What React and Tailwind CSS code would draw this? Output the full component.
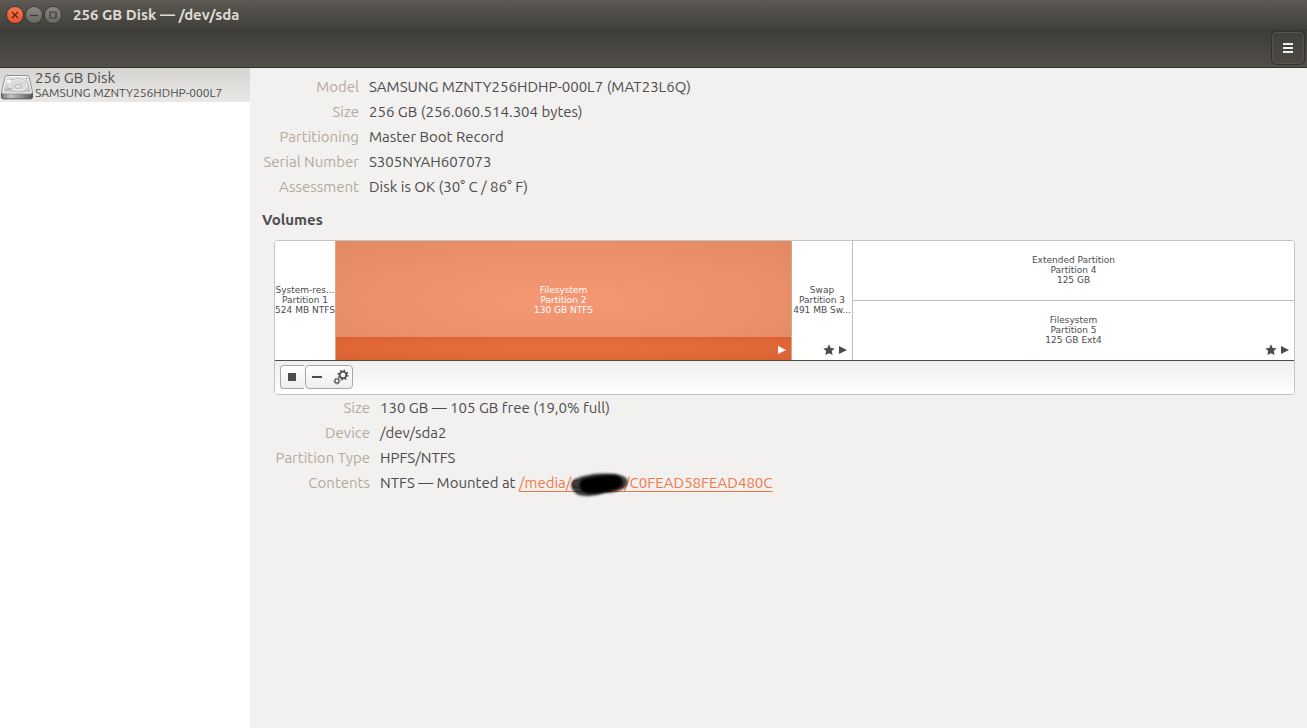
import { useState } from 'react';

const diskInfo = [
    { label: 'Model', value: 'SAMSUNG MZNTY256HDHP-000L7 (MAT23L6Q)' },
    { label: 'Size', value: '256 GB (256.060.514.304 bytes)' },
    { label: 'Partitioning', value: 'Master Boot Record' },
    { label: 'Serial Number', value: 'S305NYAH607073' },
    { label: 'Assessment', value: 'Disk is OK (30° C / 86° F)' },
];

export default function App(){

    const [selected, setSelected] = useState(2);

    return(
        <div className="flex min-h-screen flex-col bg-[#f2f1f0] font-['Ubuntu','Noto_Sans',sans-serif] text-[15px] text-[#4c4c4c]">
            <TitleBar/>
            <div className="flex grow">
                <Sidebar/>
                <main className="min-w-0 grow px-3 pt-[6px]">
                    <InfoList rows={diskInfo} columns="grid-cols-[97px_1fr] gap-x-[10px]"/>
                    <h2 className="my-2 leading-[25px] font-bold">Volumes</h2>
                    <div className="pl-3">
                        <Volumes selected={selected} setSelected={setSelected}/>
                        <InfoList columns="grid-cols-[96px_1fr] gap-x-[10px]" rows={[
                            { label: 'Size', value: '130 GB — 105 GB free (19,0% full)' },
                            { label: 'Device', value: '/dev/sda2' },
                            { label: 'Partition Type', value: 'HPFS/NTFS' },
                            { label: 'Contents', value: <MountPoint/> },
                        ]}/>
                    </div>
                </main>
            </div>
        </div>
    )
}

const TitleBar = () => {
    return(
        <header>
            <div className="flex h-[29px] items-center bg-linear-to-b from-[#5c5a52] to-[#403f3a] pl-[7px]">
                <div className="flex gap-[3px]">
                    <WindowButton label="Close" color="bg-linear-to-b from-[#f5764b] to-[#e9532a] text-[#5a2413]">
                        <path d="M5 5l6 6M11 5l-6 6"/>
                    </WindowButton>
                    <WindowButton label="Minimize" color="bg-linear-to-b from-[#8b8981] to-[#686760] text-[#3c3b37]">
                        <path d="M4 8.500h8"/>
                    </WindowButton>
                    <WindowButton label="Maximize" color="bg-linear-to-b from-[#8b8981] to-[#686760] text-[#3c3b37]">
                        <path d="M5 5h6v6H5z"/>
                    </WindowButton>
                </div>
                <h1 className="ml-3 pt-px font-bold text-[#dfdbd2]">256 GB Disk — /dev/sda</h1>
            </div>
            <div className="flex h-[39px] items-center justify-end border-b border-[#33322e] bg-linear-to-b from-[#3d3c38] to-[#524f47] pr-[2px]">
                <button aria-label="Menu" className="flex h-[34px] w-[34px] items-center justify-center rounded-[5px] border border-[#33322e] bg-linear-to-b from-[#42413c] to-[#4b4942] text-[#eeeeec] shadow-[inset_0_0_0_1px_#56544d]">
                    <svg width="10" height="10" viewBox="0 0 10 10" fill="currentColor"><path d="M0 0h10v2H0zM0 4h10v2H0zM0 8h10v2H0z"/></svg>
                </button>
            </div>
        </header>
    )
}

const WindowButton = ({label, color, children}) => {
    return(
        <button aria-label={label} className={`h-4 w-4 rounded-full shadow-[0_0_0_1px_#3a3934] ${color}`}>
            <svg width="16" height="16" viewBox="0 0 16 16" fill="none" stroke="currentColor" strokeWidth="1.2">{children}</svg>
        </button>
    )
}

const Sidebar = () => {
    return(
        <nav className="w-[250px] shrink-0 bg-white">
            <a href="#sda" className="flex h-[34px] items-center gap-px bg-linear-to-b from-[#d6d4d1] to-[#eae8e6] pl-px">
                <DriveIcon/>
                <span className="flex flex-col whitespace-nowrap">
                    <span className="leading-4">256 GB Disk</span>
                    <span className="text-xs leading-[14px]">SAMSUNG MZNTY256HDHP-000L7</span>
                </span>
            </a>
        </nav>
    )
}

const DriveIcon = () => {
    return(
        <svg className="shrink-0" width="33" height="32" viewBox="0 0 33 32">
            <defs>
                <linearGradient id="plate" x1="0" y1="0" x2="0" y2="1">
                    <stop offset="0" stopColor="#e4e4e4"/>
                    <stop offset="1" stopColor="#c9c9c9"/>
                </linearGradient>
                <linearGradient id="front" x1="0" y1="0" x2="1" y2="0">
                    <stop offset="0" stopColor="#777"/>
                    <stop offset="0.3" stopColor="#c5c5c5"/>
                    <stop offset="1" stopColor="#555"/>
                </linearGradient>
            </defs>
            <path d="M.5 23.500h31v4.500q0 1.800-1.800 1.800H2.300Q.5 29.800.5 28z" fill="url(#front)" stroke="#555"/>
            <path d="M6 6.500h20q1.600 0 2.100 1.600l3.300 14.400q.5 2.500-1.700 2.500H2.300Q.2 25 .6 22.500L4 8.100q.4-1.600 2-1.600z" fill="url(#plate)" stroke="#909090"/>
            <path d="M6.300 7.700h19.400q1 0 1.300 1l3.200 13.600q.3 1.500-.9 1.500H2.700q-1.200 0-.9-1.500L5 8.700q.3-1 1.300-1z" fill="none" stroke="#fff" strokeOpacity=".75"/>
            <path d="M6 10.500h6.500q5-2 10 .3 6 3 5 8-1.500 3.700-9 4.200-6 .2-9-2.500H4" fill="#d2d2d2" stroke="#adadad" strokeWidth=".8"/>
            <ellipse cx="17" cy="16" rx="9" ry="5.500" fill="#dadada" stroke="#f4f4f4" strokeWidth=".8"/>
            <ellipse cx="17" cy="17.500" rx="3.300" ry="1.900" fill="#e8e8e8" stroke="#a8a8a8" strokeWidth=".8"/>
            <path d="M6.500 10.500h3.500l-1 3.500H5.500z" fill="#fafafa"/>
            <path d="M4 20.500l7-1" stroke="#aaa"/>
            <path d="M25 9.500h1.500M27.500 22h1.500" stroke="#999"/>
        </svg>
    )
}

const InfoList = ({rows, columns}) => {
    return(
        <dl className={`grid leading-[25px] ${columns}`}>
            {rows.map(row => (
                <div className="contents" key={row.label}>
                    <dt className="text-right whitespace-nowrap text-[#b5aa9b]">{row.label}</dt>
                    <dd>{row.value}</dd>
                </div>
            ))}
        </dl>
    )
}

const Volumes = ({selected, setSelected}) => {
    return(
        <section className="overflow-hidden rounded-[4px] border border-[#c5c3c0] bg-white">
            <div className="grid h-[119px] grid-cols-[60fr_457fr_60fr_442fr]">
                <Partition id={1} lines={['System-res...', 'Partition 1', '524 MB NTFS']} selected={selected} onSelect={setSelected}/>
                <Partition id={2} lines={['Filesystem', 'Partition 2', '130 GB NTFS']} mounted selected={selected} onSelect={setSelected}/>
                <Partition id={3} lines={['Swap', 'Partition 3', '491 MB Sw...']} star mounted selected={selected} onSelect={setSelected}/>
                <div className="grid grid-rows-2 border-l border-[#c0c0c0]">
                    <div className="grid border-b border-[#c0c0c0]">
                        <Partition id={4} lines={['Extended Partition', 'Partition 4', '125 GB']} selected={selected} onSelect={setSelected}/>
                    </div>
                    <Partition id={5} lines={['Filesystem', 'Partition 5', '125 GB Ext4']} star mounted selected={selected} onSelect={setSelected}/>
                </div>
            </div>
            <div className="flex h-[34px] gap-px border-t border-[#4c4c4c] bg-linear-to-b from-[#f0efee] to-white px-[5px] pt-1">
                <button aria-label="Unmount" className="flex h-6 w-6 items-center justify-center rounded-l-[4px] border border-r-0 border-[#a9a7a4] bg-linear-to-b from-white to-[#efeeed] pr-px">
                    <span className="h-2 w-2 bg-[#4c4c4c]"></span>
                </button>
                <div className="flex h-6 w-12 rounded-[4px] border border-[#a9a7a4] bg-linear-to-b from-white to-[#efeeed]">
                    <button aria-label="Delete partition" className="flex w-[22px] items-center justify-center">
                        <span className="h-[2px] w-[10px] bg-[#4c4c4c]"></span>
                    </button>
                    <button aria-label="More actions" className="flex w-6 items-center justify-end pr-[3px]">
                        <GearsIcon/>
                    </button>
                </div>
            </div>
        </section>
    )
}

const Partition = ({id, lines, star, mounted, selected, onSelect}) => {

    const isSelected = id === selected;

    return(
        <button onClick={() => onSelect(id)} className={`relative flex min-w-0 items-center justify-center pb-px font-['DejaVu_Sans',sans-serif] text-[9px] leading-[10px] ${isSelected ? 'border-x border-[#d9a48c] bg-radial from-[#f59873] to-[#e28a64] text-white':'bg-white text-[#4c4c4c]'}`}>
            {isSelected && <span className="absolute inset-x-0 bottom-0 h-[23px] bg-radial from-[#e8703f] to-[#db6230]"></span>}
            <span className="relative whitespace-nowrap">
                {lines.map(line => <span className="block" key={line}>{line}</span>)}
            </span>
            {mounted && (
                <span className="absolute right-[5px] bottom-[4px] flex h-3 items-center gap-1">
                    {star && <svg width="12" height="12" viewBox="0 0 12 12" fill="currentColor"><path d="M6 .3l1.700 3.600 4 .5-2.900 2.700.8 4L6 9.200 2.400 11.100l.8-4L.3 4.400l4-.5z"/></svg>}
                    <svg width="8" height="8" viewBox="0 0 8 8" fill="currentColor"><path d="M0 0l8 4-8 4z"/></svg>
                </span>
            )}
        </button>
    )
}

const GearsIcon = () => {
    return(
        <svg width="16" height="16" viewBox="0 0 16 16" fill="none" stroke="#4c4c4c">
            <circle cx="10" cy="6" r="3.300" strokeWidth="1.800"/>
            <circle cx="10" cy="6" r="4.800" strokeWidth="1.400" strokeDasharray="1.700 2.070"/>
            <circle cx="4" cy="12" r="2" strokeWidth="1.100"/>
            <circle cx="4" cy="12" r="3" strokeWidth="1" strokeDasharray="1.100 1.256"/>
        </svg>
    )
}

const MountPoint = () => {
    return(
        <>
            NTFS — Mounted at{' '}
            <a href="#media" className="inline-block border-b border-[#f07746] leading-[17px] whitespace-nowrap text-[#f07746]">
                /media/
                <span className="relative inline-flex w-[53px] justify-between">
                    <span>c</span>
                    <span>n</span>
                    <Scribble/>
                </span>
                /C0FEAD58FEAD480C
            </a>
        </>
    )
}

const Scribble = () => {
    return(
        <svg className="absolute -top-[3px] -left-[2px]" width="64" height="28" viewBox="0 0 64 28">
            <defs><filter id="soft"><feGaussianBlur stdDeviation="1.200"/></filter></defs>
            <path d="M6 8Q20 2 36 2.500Q53 2 58 8Q60 14 54 18Q46 22 36 22Q22 27 9 24Q2 19 2 14Q3 9 6 8z" fill="#000" fillOpacity=".75" filter="url(#soft)"/>
            <path d="M14 8Q32 3 48 4.500Q56 8 52 16Q42 21 26 22.500Q13 23 11 17Q9 12 14 8z" fill="#000" filter="url(#soft)"/>
        </svg>
    )
}
